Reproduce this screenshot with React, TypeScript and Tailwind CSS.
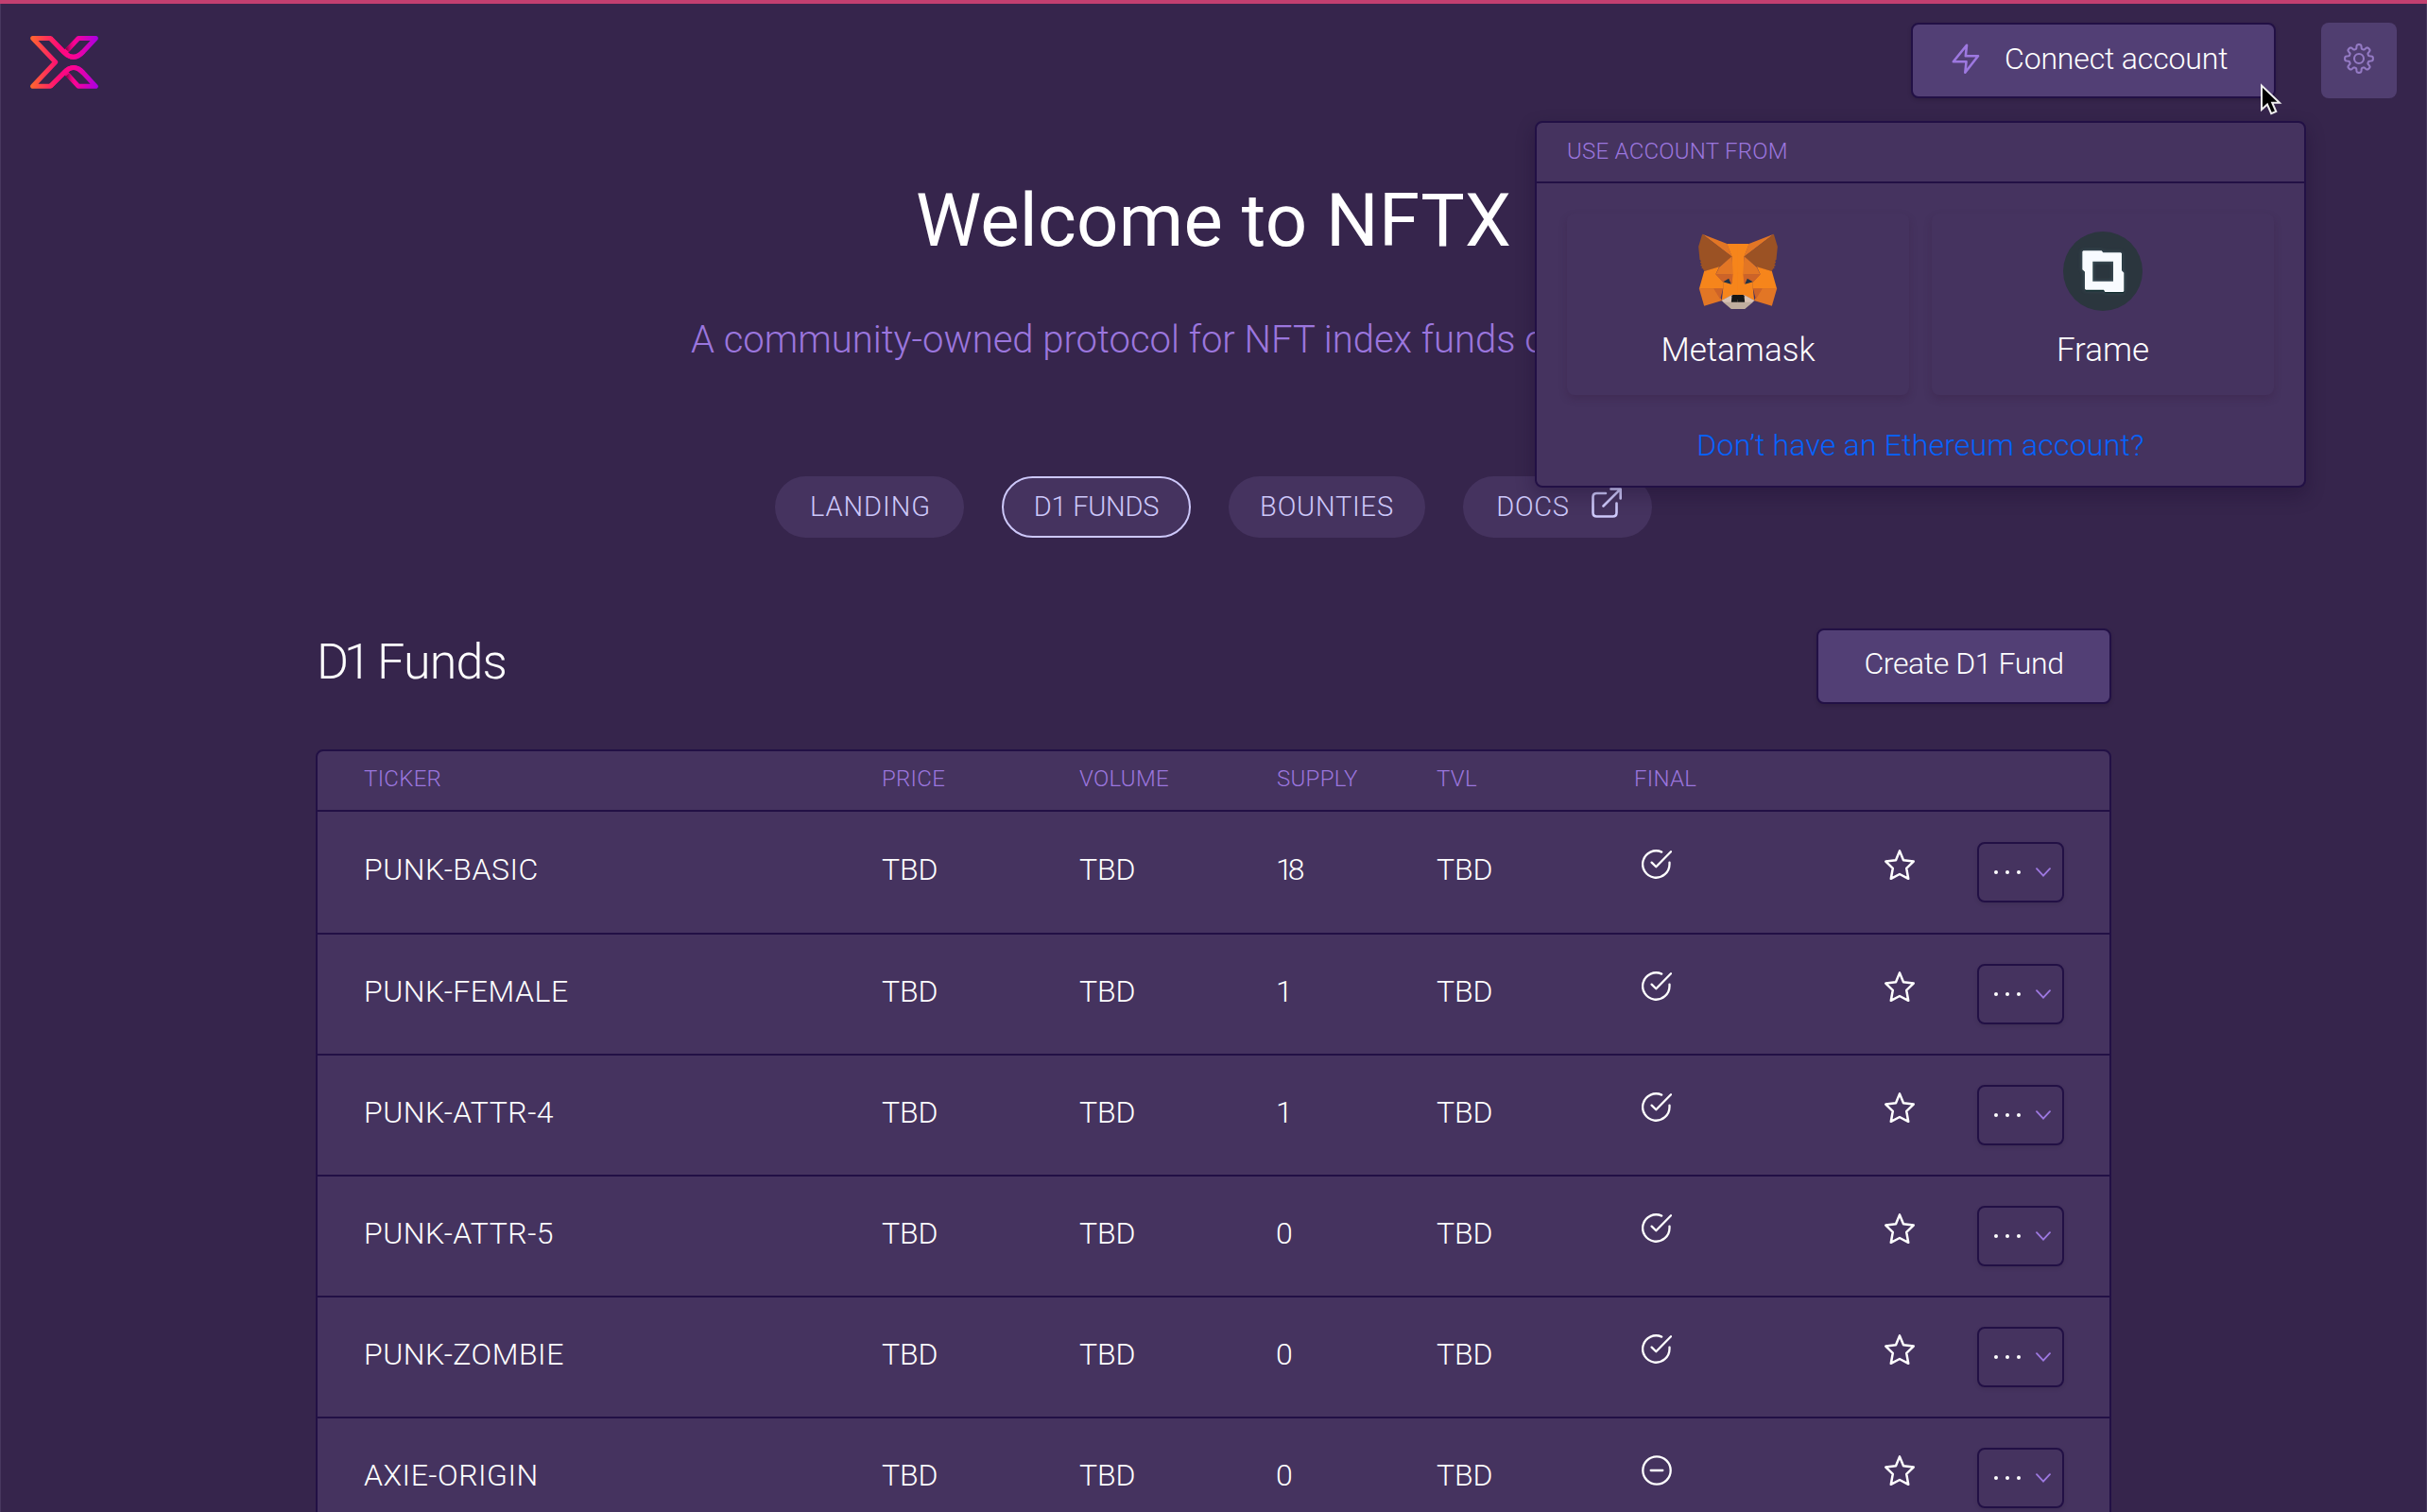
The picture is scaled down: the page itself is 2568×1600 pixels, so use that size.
import type { ReactNode } from "react";

function Logo() {
  return (
    <svg className="h-14 w-[72px]" viewBox="96 114 216 168" fill="none" strokeWidth="15" strokeLinejoin="round">
      <defs>
        <linearGradient id="nftx" gradientUnits="userSpaceOnUse" x1="96" y1="0" x2="312" y2="0">
          <stop offset="0" stopColor="#ff6a2b" />
          <stop offset="0.42" stopColor="#ff0a78" />
          <stop offset="0.65" stopColor="#fb0394" />
          <stop offset="1" stopColor="#a800e6" />
        </linearGradient>
        <linearGradient id="shade" gradientUnits="userSpaceOnUse" x1="208" y1="0" x2="240" y2="0">
          <stop offset="0" stopColor="#6d0033" />
          <stop offset="1" stopColor="#fb0394" stopOpacity="0" />
        </linearGradient>
      </defs>
      <path stroke="url(#nftx)" d="M210 163 L249 121.500 H304 L264 164 Q234 197 203 166 L160 121.500 H104 L176 197.500 L104 274 H160 L203 231 Q234 198 264 231 L304 274 H249 L212 234" />
      <path stroke="url(#shade)" d="M213 160 L238 133 M214 237 L238 263" />
      <path stroke="url(#nftx)" d="M160 121.500 L203 166 Q234 197 264 164 M160 274 L203 231 Q234 198 264 231" />
    </svg>
  );
}

function Bolt() {
  return (
    <svg className="size-8" viewBox="0 0 32 32" fill="none" stroke="#9d78e0" strokeWidth="2.600" strokeLinejoin="round">
      <path d="M17 1.800 L15.800 13.300 H29 L15.300 30.800 L16.500 19.300 H2.800 Z" />
    </svg>
  );
}

const gearPath =
  Array.from({ length: 160 }, (_, i) => {
    const a = (i / 160) * Math.PI * 2;
    const r = 12.7 + 2.2 * Math.tanh(2.4 * (Math.cos(8 * a) + 0.05));
    return `${i ? "L" : "M"}${(16 + r * Math.cos(a)).toFixed(2)} ${(16 + r * Math.sin(a)).toFixed(2)}`;
  }).join(" ") + "Z";

function Gear() {
  return (
    <svg className="size-8" viewBox="0 0 32 32" fill="none" stroke="#947ac4" strokeWidth="2.100" strokeLinejoin="round">
      <path d={gearPath} />
      <circle cx="16" cy="16" r="5" />
    </svg>
  );
}

function FoxHalf() {
  return (
    <>
      <path fill="#f6851b" d="M202 113H238V276H216L218 154Z" />
      <path fill="#e27625" d="M124 82L203 113L219 155Z" />
      <path fill="#9b5224" d="M124 82L219 154L177 187L130 200L126 192L121 190L124 186L118 182L122 177L117 172L120 167L116 163L112 122Z" />
      <path fill="#f6851b" d="M130 200L178 186L167 209L190 234L190 256H114Z" />
      <path fill="#e27625" d="M218 153L222 211H166L178 187Z" />
      <path fill="#cd6328" d="M166 210H222L219 242L190 235Z" />
      <path fill="#f6851b" d="M190 233L219 240L222 210L238 205V276H218L186 293L190 256Z" />
      <path fill="#e27625" d="M114 255H162L187 293L130 310Z" />
      <path fill="#cd6328" d="M160 255H190L181 289Z" />
      <path fill="#233447" d="M190 234L208 223L216 241Z" />
      <path fill="#d7c1b3" d="M185 293L217 276L238 290V299H192Z" />
      <path fill="#c0ad9e" d="M190 298H238V320H216Z" />
      <path fill="#161616" d="M222 275H238V298H216L218 279Z" />
    </>
  );
}

function Fox() {
  return (
    <svg className="h-[80px] w-[84px]" viewBox="111.500 80 252 240">
      <FoxHalf />
      <g transform="translate(475 0) scale(-1 1)">
        <FoxHalf />
      </g>
    </svg>
  );
}

function FrameLogo() {
  return (
    <svg className="size-[84px]" viewBox="99 44 252 252">
      <defs>
        <filter id="glow" x="-50%" y="-50%" width="200%" height="200%">
          <feGaussianBlur stdDeviation="7" />
        </filter>
      </defs>
      <circle cx="225" cy="170" r="126" fill="#2b363e" />
      <path fill="#5d7f8c" opacity="0.5" filter="url(#glow)" fillRule="evenodd" d="M163 105H221L226 111H282L285 114V168L292 175V234L289 237H232L228 231H171L168 228V172L160 165V108ZM193 139V202H258V139Z" />
      <path fill="#0f2a2c" transform="translate(1 3)" fillRule="evenodd" d="M163 105H221L226 111H282L285 114V168L292 175V234L289 237H232L228 231H171L168 228V172L160 165V108ZM193 136V202H258V136Z" />
      <path fill="#f8fbff" fillRule="evenodd" d="M163 105H221L226 111H282L285 114V168L292 175V234L289 236H232L228 229H171L168 226V172L160 165V108ZM193 139V202H258V139Z" />
    </svg>
  );
}

function External() {
  return (
    <svg className="size-8" viewBox="0 0 32 32" fill="none" stroke="#cdc8fa" strokeWidth="2.600" strokeLinecap="round" strokeLinejoin="round">
      <path d="M15 6H5.500Q1.500 6 1.500 10V26.500Q1.500 30.500 5.500 30.500H22.500Q26.500 30.500 26.500 26.500V16.500M20.500 1.500H30.700V11.500M30.500 1.700L12.500 19.500" />
    </svg>
  );
}

function Check() {
  return (
    <svg className="size-8" viewBox="0 0 32 32" fill="none" stroke="#fff" strokeWidth="2.300" strokeLinecap="round" strokeLinejoin="round">
      <path d="M29.500 13.600V15.500A14.200 14.200 0 1 1 21.200 2.600" />
      <path d="M31 2.200L15.300 18.300L10.600 13.600" />
    </svg>
  );
}

function Minus() {
  return (
    <svg className="size-8" viewBox="0 0 32 32" fill="none" stroke="#fff" strokeWidth="2.300" strokeLinecap="round">
      <circle cx="16" cy="16" r="14.700" />
      <path d="M9.700 16H22.300" />
    </svg>
  );
}

function Star() {
  return (
    <svg className="size-8" viewBox="0 0 32 32" fill="none" stroke="#fff" strokeWidth="2.500" strokeLinejoin="round">
      <path d="M16 1.400L20 11.200L30.700 12.600L23.200 19.800L25.200 30.800L16 26L6.800 30.800L8.800 19.800L1.300 12.600L12 11.200Z" />
    </svg>
  );
}

function MoreButton() {
  return (
    <button className="flex h-16 w-[92px] items-center rounded-lg border-2 border-[#221045] pl-4 shadow-[0_2px_4px_rgba(0,0,0,0.1)]">
      <span className="flex gap-2">
        <i className="size-1 rounded-full bg-white" />
        <i className="size-1 rounded-full bg-white" />
        <i className="size-1 rounded-full bg-white" />
      </span>
      <svg className="ml-4 h-[10px] w-4" viewBox="0 0 16 10" fill="none" stroke="#9d78e0" strokeWidth="1.800" strokeLinecap="round">
        <path d="M1 1.200L8 8.700L15 1.200" />
      </svg>
    </button>
  );
}

function Cursor() {
  return (
    <svg className="absolute top-[87px] left-[2389px] h-9 w-7" viewBox="0 0 28 36">
      <path d="M4 3.500V29L10 23.500L14.200 33.200L19.300 31L15.200 21.700H23Z" fill="#000" stroke="#eee" strokeWidth="2" />
    </svg>
  );
}

function Wallet({ icon, name }: { icon: ReactNode; name: string }) {
  return (
    <button className="flex h-48 flex-1 flex-col items-center rounded-lg pt-[19px] text-white shadow-[0_4px_8px_rgba(50,20,50,0.22)]">
      <span className="flex h-[84px] items-center">{icon}</span>
      <span className="mt-[21px] text-[35px] leading-[42px]">{name}</span>
    </button>
  );
}

function AccountMenu() {
  return (
    <div className="absolute top-32 left-[1624px] flex h-[388px] w-[816px] flex-col rounded-lg border-2 border-[#221045] bg-[#45335f] shadow-[0_8px_20px_rgba(20,5,40,0.3)]">
      <div className="flex h-16 items-center border-b-2 border-[#221045] pb-[3px] pl-8 text-2xl tracking-[0.25px] text-[#9b76de]">
        USE ACCOUNT FROM
      </div>
      <div className="flex gap-6 px-8 pt-8">
        <Wallet icon={<Fox />} name="Metamask" />
        <Wallet icon={<FrameLogo />} name="Frame" />
      </div>
      <a className="mt-8 text-center text-[32px] leading-[42px] tracking-[0.2px] text-[#0563ff]">Don’t have an Ethereum account?</a>
    </div>
  );
}

const pill = "flex h-[65px] items-center justify-center rounded-full bg-[#45335f] text-[29px]";
const cols = "grid grid-cols-[549px_209px_209px_169px_209px_1fr] pl-12";

const funds: [string, string, boolean][] = [
  ["PUNK-BASIC", "18", true],
  ["PUNK-FEMALE", "1", true],
  ["PUNK-ATTR-4", "1", true],
  ["PUNK-ATTR-5", "0", true],
  ["PUNK-ZOMBIE", "0", true],
  ["AXIE-ORIGIN", "0", false],
];

export default function App() {
  return (
    <div className="relative h-[1600px] w-[2568px] overflow-hidden bg-[#36254c] font-['Roboto',sans-serif] font-[350]">
      <div className="h-1 bg-[#c33f70]" />
      <div className="h-[1596px] border-x border-[#48385f]">
        <header className="flex h-[100px] items-start justify-between pt-5 pr-[31px] pl-[31px]">
          <div className="pt-3.5">
            <Logo />
          </div>
          <div className="flex gap-12">
            <button className="flex h-20 w-[386px] items-center rounded-lg border-2 border-[#221045] bg-[#523f75] pb-1 pl-10 text-[32px] text-white shadow-[0_2px_4px_rgba(0,0,0,0.15)]">
              <Bolt />
              <span className="ml-[25px] pb-px tracking-[-0.15px]">Connect account</span>
            </button>
            <button className="flex size-20 items-center justify-center rounded-lg bg-[#503e70] pb-1">
              <Gear />
            </button>
          </div>
        </header>

        <h1 className="mt-[82px] text-center text-[78px] leading-[96px] font-normal tracking-[0.26px] text-white">Welcome to NFTX</h1>
        <p className="mt-[50px] text-center text-[40px] leading-[56px] text-[#9b76de]">
          A community-owned protocol for NFT index funds on Ethereum
        </p>

        <nav className="mt-[116px] flex justify-center gap-10 text-[#cdc8fa]">
          <a className={`${pill} w-[200px] pl-0.5 tracking-[0.9px]`}>LANDING</a>
          <a className={`${pill} w-[200px] border-2 border-[#cdc8fa] tracking-[-0.25px]`}>D1 FUNDS</a>
          <a className={`${pill} w-[208px] tracking-[0.8px]`}>BOUNTIES</a>
          <a className={`${pill} w-[200px] gap-[23px] pl-[3px] tracking-[0.67px]`}>
            DOCS
            <span className="pb-2.5">
              <External />
            </span>
          </a>
        </nav>

        <main className="mx-auto w-[1900px]">
          <div className="mt-24 flex h-20 items-center justify-between">
            <h2 className="pb-2 pl-px text-[52px] tracking-[-0.8px] text-white [word-spacing:-5px]">
              <span className="tracking-[-5px]">D</span>1 Funds
            </h2>
            <button className="flex h-20 w-[312px] items-center justify-center rounded-lg border-2 border-[#221045] bg-[#523f75] pb-1.5 text-[32px] tracking-[-0.4px] text-white shadow-[0_2px_4px_rgba(0,0,0,0.15)]">
              Create D1 Fund
            </button>
          </div>

          <div className="mt-12 rounded-t-lg border-2 border-[#221045] bg-[#45335f]">
            <div className={`${cols} h-16 items-center border-b-2 border-[#221045] pb-1 text-2xl tracking-[0.3px] text-[#9b76de]`}>
              <span className="pl-px">TICKER</span>
              <span>PRICE</span>
              <span>VOLUME</span>
              <span>SUPPLY</span>
              <span>TVL</span>
              <span>FINAL</span>
            </div>
            {funds.map(([ticker, supply, final]) => (
              <div key={ticker} className={`${cols} h-32 items-center border-b-2 border-[#221045] text-[32px] text-white nth-2:h-[130px]`}>
                <span className="pb-1.5 pl-px tracking-[0.5px]">{ticker}</span>
                <span className="pb-1.5 tracking-[-0.1px]">TBD</span>
                <span className="pb-1.5 tracking-[-0.1px]">TBD</span>
                <span className="-ml-px pb-1.5 tracking-[-5px]">{supply}</span>
                <span className="pb-1.5 tracking-[-0.1px]">TBD</span>
                <span className="flex items-center justify-between pr-12">
                  <span className="pb-4 pl-2">{final ? <Check /> : <Minus />}</span>
                  <span className="flex items-center gap-[66px]">
                    <span className="pb-4">
                      <Star />
                    </span>
                    <MoreButton />
                  </span>
                </span>
              </div>
            ))}
          </div>
        </main>
      </div>
      <AccountMenu />
      <Cursor />
    </div>
  );
}
